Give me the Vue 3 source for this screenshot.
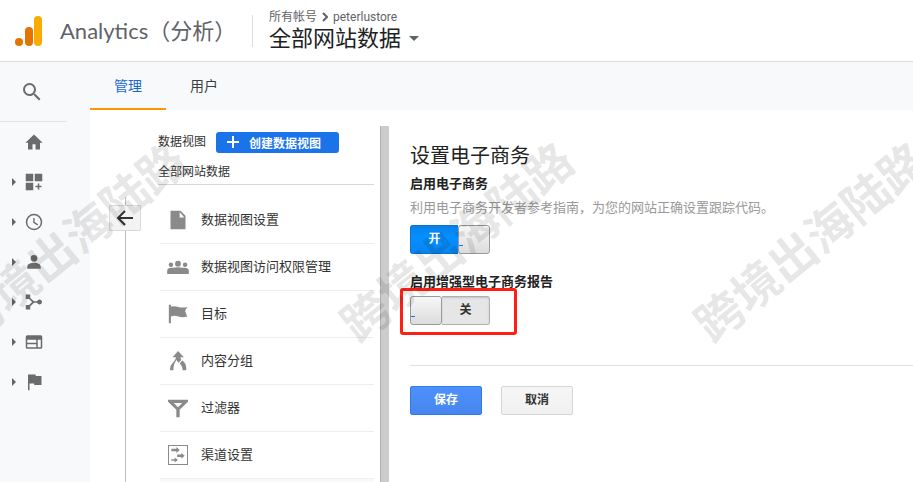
<template>
  <div class="page">
    <header class="header">
      <svg class="logo" viewBox="0 0 28 32" aria-hidden="true">
        <circle cx="4" cy="27" r="4" fill="#e37400" />
        <rect x="10" y="12" width="8" height="19" rx="4" fill="#e37400" />
        <rect x="19" y="1" width="8" height="30" rx="4" fill="#f9ab00" />
      </svg>
      <div class="brand">Analytics（分析）</div>
      <div class="account">
        <div class="crumbs">
          <span>所有帐号</span>
          <svg class="chevron" viewBox="0 0 6 10"><path d="M1 1l4 4-4 4" /></svg>
          <span>peterlustore</span>
        </div>
        <button class="view-picker">
          全部网站数据
          <svg class="caret" viewBox="0 0 10 5"><path d="M0 0h10L5 5z" /></svg>
        </button>
      </div>
    </header>

    <div class="body">
      <aside class="sidebar">
        <button class="search" aria-label="搜索">
          <svg viewBox="0 0 24 24"><path :d="searchIcon" /></svg>
        </button>
        <nav class="nav">
          <a v-for="item in navItems" :key="item.name" href="#" class="nav-item" :aria-label="item.name">
            <svg class="nav-arrow" viewBox="0 0 4 8">
              <path v-if="item.expandable" d="M0 0l4 4-4 4z" />
            </svg>
            <svg class="nav-icon" viewBox="0 0 24 24"><path :d="item.icon" fill-rule="evenodd" /></svg>
          </a>
        </nav>
      </aside>

      <main class="main">
        <div class="tabs">
          <button class="tab active">管理</button>
          <button class="tab">用户</button>
        </div>

        <div class="content">
          <div class="back-rail">
            <button class="back" aria-label="返回">
              <svg viewBox="0 0 18 18"><path d="M17 9H2M9 2L2 9l7 7" /></svg>
            </button>
          </div>

          <section class="column">
            <div class="column-head">
              <span class="column-type">数据视图</span>
              <button class="create">
                <svg viewBox="0 0 14 14"><path d="M7 1v12M1 7h12" /></svg>
                创建数据视图
              </button>
            </div>
            <div class="column-name">全部网站数据</div>
            <ul class="menu">
              <li v-for="item in menuItems" :key="item.label">
                <a href="#" class="menu-item">
                  <svg class="menu-icon" viewBox="0 0 24 24">
                    <path :d="item.icon" fill-rule="evenodd" />
                  </svg>
                  <span class="menu-label">{{ item.label }}</span>
                </a>
              </li>
            </ul>
            <div class="menu-rest"></div>
          </section>

          <div class="divider"></div>

          <form class="settings" @submit.prevent>
            <h1>设置电子商务</h1>
            <h2 id="ecommerce">启用电子商务</h2>
            <p class="hint">利用电子商务开发者参考指南，为您的网站正确设置跟踪代码。</p>
            <label class="toggle">
              <input v-model="ecommerce" type="checkbox" aria-labelledby="ecommerce">
              <span v-if="ecommerce" class="state on">开</span>
              <span class="knob"></span>
              <span v-if="!ecommerce" class="state off">关</span>
            </label>

            <h2 id="enhanced" class="second">启用增强型电子商务报告</h2>
            <div class="marked">
              <label class="toggle">
                <input v-model="enhanced" type="checkbox" aria-labelledby="enhanced">
                <span v-if="enhanced" class="state on">开</span>
                <span class="knob"></span>
                <span v-if="!enhanced" class="state off">关</span>
              </label>
            </div>

            <div class="actions">
              <button type="submit" class="btn btn-primary">保存</button>
              <button type="button" class="btn">取消</button>
            </div>
          </form>
        </div>
      </main>
    </div>

    <div class="watermarks" aria-hidden="true">
      <span v-for="n in 3" :key="n" class="watermark" :class="'mark-' + n">跨境出海陆路</span>
    </div>
  </div>
</template>

<script setup>
import { ref } from 'vue'

const ecommerce = ref(true)
const enhanced = ref(false)

const searchIcon = 'M15.5 14h-.79l-.28-.27A6.47 6.47 0 0 0 16 9.5 6.5 6.5 0 1 0 9.5 16c1.61 0 3.09-.59 4.23-1.57l.27.28v.79l5 4.99L20.49 19l-4.99-5zm-6 0a4.5 4.5 0 1 1 0-9 4.5 4.5 0 0 1 0 9z'

const navItems = [
  { name: '首页', icon: 'M10 22v-7h4v7h6v-9h3.500L12 2 .5 13H4v9z' },
  { name: '自定义', expandable: true, icon: 'M1 1h10v10H1zM13 1h10v10H13zM1 13h10v10H1zM17 14h2v3h3v2h-3v3h-2v-3h-3v-2h3z' },
  { name: '实时', expandable: true, icon: 'M12 1a11 11 0 1 0 0 22 11 11 0 0 0 0-22zm0 2a9 9 0 1 1 0 18 9 9 0 0 1 0-18zM11 6.500V13l5.500 3.500 1-1.500-4.700-3V6.500z' },
  { name: '受众群体', expandable: true, icon: 'M12 11.500a4.500 4.500 0 1 0 0-9 4.500 4.500 0 0 0 0 9zM12 13c-4 0-9 1.700-9 5v3h18v-3c0-3.300-5-5-9-5z' },
  { name: '流量获取', expandable: true, icon: 'M1 2h6v4.500l5 4.500h4.200a3.300 3.300 0 1 1 0 2H12l-5 4.500V22H1v-6h4.500l4-4-4-4H1z' },
  { name: '行为', expandable: true, icon: 'M21 3H3a2 2 0 0 0-2 2v14a2 2 0 0 0 2 2h18a2 2 0 0 0 2-2V5a2 2 0 0 0-2-2zM15 19H3v-4h12zm0-6H3V9h12zm6 6h-4V9h4z' },
  { name: '转化', expandable: true, icon: 'M14.400 4L14 2H4v21h2v-9h6l.4 2H22V4z' }
]

const menuItems = [
  { label: '数据视图设置', icon: 'M3 1h12l6 6v16H3zM14 2.500V9h5.500z' },
  { label: '数据视图访问权限管理', icon: 'M12 4.500a3.500 3.500 0 1 1 0 7 3.500 3.500 0 0 1 0-7zM3.500 6.500a2.700 2.700 0 1 1 0 5.400 2.700 2.700 0 0 1 0-5.400zM20.500 6.500a2.700 2.700 0 1 1 0 5.400 2.700 2.700 0 0 1 0-5.400zM-1 20.500v-4c0-3 3-4 7-3.500q6-1.500 12 0c4-.5 7 .5 7 3.500v4z' },
  { label: '目标', icon: 'M1 1h2.500v2Q8 2 12.500 3.500t10.500 0l-2.500 5L23 15q-6 2-10.500 0t-9 0v8H1z' },
  { label: '内容分组', icon: 'M12 0l7 7.500h-4c0 1 0 2 1 3l-3 3.500c-1.500-1-2.500-2-3-3.500-.6 3-3.500 4-3.500 12.500H2.500C2 14 9 14 9.500 7.500H5.500zM17 11.500c4 2.500 5 5.500 5 11.500h-4.500c0-3.500-1-5.500-3.500-8z' },
  { label: '过滤器', icon: 'M0 2h24v2.500L14 14v9h-4v-9L0 4.500zM7 6l5 5 5-5z' },
  { label: '渠道设置', icon: 'M0 0h24v24H0zM1.200 1.200v21.600h21.600V1.200zM4 4.500h6V2.500l4 3.500-4 3.500V7.500H4zM11 11.500h5v-2l4 3.500-4 3.500v-2h-5zM4 17h4v-2l4 3-4 3v-2H4z' }
]
</script>

<style>
body {
  margin: 0;
}
</style>

<style scoped>
.page {
  position: relative;
  display: flex;
  flex-direction: column;
  min-height: 100vh;
  overflow: hidden;
  background: #fff;
  color: #333;
  font-family: Roboto, "Noto Sans CJK SC", sans-serif;
  font-size: 13px;
}

.page * {
  box-sizing: border-box;
}

button {
  padding: 0;
  border: none;
  background: none;
  color: inherit;
  font-family: inherit;
  cursor: pointer;
}

a {
  color: inherit;
  text-decoration: none;
}

svg {
  display: block;
  flex: none;
}

.header {
  display: flex;
  align-items: center;
  height: 62px;
  padding-left: 15px;
  border-bottom: 1px solid #dadce0;
}

.logo {
  width: 28px;
  height: 32px;
}

.brand {
  width: 192px;
  margin-left: 17px;
  padding-bottom: 4px;
  color: #5f6368;
  font-family: Lato, "Noto Sans CJK SC", sans-serif;
  font-size: 22px;
  white-space: nowrap;
}

.account {
  height: 32px;
  display: flex;
  flex-direction: column;
  justify-content: center;
  padding-left: 16px;
  border-left: 1px solid #dadce0;
}

.crumbs {
  display: flex;
  align-items: center;
  gap: 5px;
  color: #5f6368;
  font-size: 12px;
  line-height: 16px;
}

.chevron {
  width: 6px;
  height: 10px;
  fill: none;
  stroke: #5f6368;
  stroke-width: 2;
}

.view-picker {
  display: flex;
  align-items: center;
  gap: 8px;
  color: #202124;
  font-size: 22px;
  line-height: 28px;
}

.caret {
  width: 10px;
  height: 5px;
  fill: #5f6368;
}

.body {
  display: flex;
  flex: 1;
}

.sidebar {
  flex: none;
  width: 90px;
  background: #f8f9fb;
}

.search {
  display: flex;
  align-items: center;
  width: 66px;
  height: 60px;
  padding-left: 20px;
  border-bottom: 1px solid #dfe1e5;
}

.search svg {
  width: 24px;
  height: 24px;
  fill: #6b6b6b;
}

.nav-item {
  display: flex;
  align-items: center;
  gap: 9px;
  height: 40px;
  padding-left: 12px;
}

.nav-arrow {
  width: 4px;
  height: 8px;
  fill: #666;
}

.nav-icon {
  width: 18px;
  height: 18px;
  fill: #6b6b6b;
}

.main {
  display: flex;
  flex: 1;
  flex-direction: column;
  min-width: 0;
}

.tabs {
  display: flex;
  height: 48px;
  background: #f8f9fb;
}

.tab {
  width: 76px;
  border-bottom: 2px solid transparent;
  color: #3c4043;
  font-size: 14px;
}

.tab.active {
  border-bottom-color: #ff9800;
  color: #1967d2;
}

.content {
  display: flex;
  flex: 1;
  padding-top: 16px;
}

.back-rail {
  display: flex;
  flex-direction: column;
  align-items: center;
  width: 70px;
  padding-top: 71px;
}

.back-rail::before,
.back-rail::after {
  content: "";
  width: 1px;
  height: 8px;
  background: #bdbdbd;
}

.back-rail::after {
  flex: 1;
}

.back {
  display: flex;
  align-items: center;
  justify-content: center;
  width: 32px;
  height: 26px;
  border: 1px solid #d9d9d9;
  border-radius: 1px;
  background: #f3f3f3;
}

.back svg {
  width: 18px;
  height: 18px;
  fill: none;
  stroke: #333;
  stroke-width: 2;
}

.column {
  display: flex;
  flex-direction: column;
  width: 216px;
  margin-left: -2px;
}

.column-head {
  display: flex;
  align-items: center;
  gap: 10px;
  height: 32px;
  font-size: 12px;
}

.column-type {
  padding-bottom: 4px;
}

.create {
  display: flex;
  align-items: center;
  gap: 9px;
  width: 123px;
  height: 21px;
  padding-left: 10px;
  border-radius: 3px;
  background: #1a73e8;
  color: #fff;
  font-size: 12px;
  font-weight: 700;
}

.create svg {
  width: 14px;
  height: 14px;
  stroke: #fff;
  stroke-width: 2;
}

.column-name {
  height: 27px;
  border-bottom: 1px solid #d5d7dd;
  font-size: 12px;
  line-height: 28px;
}

.menu {
  margin: 0;
  padding: 12px 0 0 2px;
  list-style: none;
}

.menu-item {
  display: flex;
  align-items: center;
  gap: 13px;
  height: 47px;
  padding-left: 8px;
  border-bottom: 1px solid #eceff1;
}

.menu-icon {
  width: 20px;
  height: 20px;
  overflow: visible;
  fill: #8a8a8a;
}

.menu-label {
  padding-bottom: 4px;
}

.menu-rest {
  flex: 1;
  margin-left: 2px;
  background: #f8f9fb;
}

.divider {
  flex: none;
  width: 9px;
  margin-left: 6px;
  border-left: 1px solid #b0b0b0;
  background: #ccc;
}

.settings {
  flex: 1;
  min-width: 0;
  padding: 16px 0 0 21px;
}

h1 {
  margin: 0;
  color: #222;
  font-size: 20px;
  font-weight: 400;
  line-height: 28px;
}

h2 {
  margin: 0;
  color: #222;
  font-size: 13px;
  font-weight: 700;
  line-height: 28px;
}

h2.second {
  margin-top: 14px;
}

.hint {
  margin: 0 0 7px;
  color: #999;
  line-height: 20px;
}

.toggle {
  display: flex;
  width: 80px;
  height: 29px;
  cursor: pointer;
}

.toggle input {
  width: 0;
  height: 0;
  margin: 0;
  appearance: none;
}

.state {
  width: 48px;
  font-size: 12px;
  font-weight: 700;
  line-height: 26px;
  text-align: center;
}

.state.on {
  border: 1px solid #0872d1;
  border-right: none;
  border-radius: 3px 0 0 3px;
  background: linear-gradient(#0780e8, #0590ff 40%, #0a84ee);
  color: #fff;
}

.state.off {
  border: 1px solid #b0b0b0;
  border-left: none;
  border-radius: 0 3px 3px 0;
  background: #e6e6e6;
  box-shadow: inset 0 1px 2px rgba(0, 0, 0, 0.15);
}

.knob {
  display: flex;
  align-items: flex-end;
  width: 32px;
  padding-bottom: 7px;
  border: 1px solid #999;
  border-radius: 3px;
  background: linear-gradient(#f7f7f7, #dcdcdc);
}

.knob::after {
  content: "";
  width: 4px;
  height: 1px;
  background: #1a73e8;
}

.marked {
  position: relative;
}

/* red frame around the switch */
.marked::after {
  content: "";
  position: absolute;
  top: -8px;
  left: -10px;
  box-sizing: border-box;
  width: 117px;
  height: 47px;
  border: 3px solid #ff2015;
  border-radius: 3px;
  pointer-events: none;
}

.actions {
  display: flex;
  gap: 19px;
  margin-top: 40px;
  padding-top: 20px;
  border-top: 1px solid #e0e0e0;
}

.btn {
  width: 72px;
  height: 29px;
  padding-bottom: 4px;
  border: 1px solid #d5d5d5;
  border-radius: 2px;
  background: linear-gradient(#f6f6f6, #f0f0f0);
  font-size: 12px;
  font-weight: 700;
}

.btn-primary {
  border-color: #3079ed;
  background: linear-gradient(#4d90fe, #4787ed);
  color: #fff;
}

.watermarks {
  position: absolute;
  inset: 0;
  pointer-events: none;
}

.watermark {
  position: absolute;
  top: 243px;
  color: rgba(0, 0, 0, 0.1);
  font-size: 47px;
  font-weight: 700;
  line-height: 48px;
  white-space: nowrap;
  transform: translate(-50%, -50%) rotate(-39deg);
}

.mark-1 {
  left: 71px;
}

.mark-2 {
  left: 458px;
}

.mark-3 {
  left: 812px;
}
</style>
